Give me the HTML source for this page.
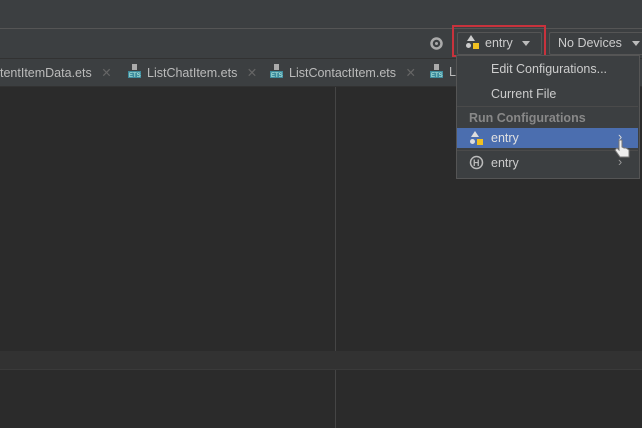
<!DOCTYPE html>
<html><head><style>
body{margin:0;width:642px;height:428px;overflow:hidden;background:#2b2b2b;font-family:"Liberation Sans",sans-serif;position:relative}
.a{position:absolute}
.t{color:#bbbbbb;font-size:12.5px;white-space:nowrap}
</style></head><body>
<div class="a" style="left:0;top:0;width:642px;height:28px;background:#3c3f41"></div>
<div class="a" style="left:0;top:28px;width:642px;height:1px;background:#555"></div>
<div class="a" style="left:0;top:29px;width:642px;height:29px;background:#3c3f41"></div>
<div class="a" style="left:0;top:58px;width:642px;height:1px;background:#323232"></div>
<div class="a" style="left:0;top:59px;width:642px;height:27px;background:#3c3f41"></div>
<div class="a" style="left:0;top:86px;width:642px;height:1px;background:#323232"></div>
<div class="a" style="left:335px;top:87px;width:1px;height:341px;background:#454545"></div>
<div class="a" style="left:0;top:351px;width:642px;height:19px;background:#323232"></div>
<div class="a" style="left:0;top:369px;width:642px;height:1px;background:#3a3a3a"></div>

<!-- tabs -->
<div class="a t" style="left:0;top:65px">tentItemData.ets <span style="color:#666;margin-left:6px">✕</span></div>
<svg class="a" style="left:127px;top:64px" width="15" height="15"><rect x="5" y="0" width="5" height="6" fill="#aaa"/><rect x="1" y="7" width="13" height="7" fill="#3d8a9c"/><text x="2" y="13" font-size="6" fill="#cfe" font-family="Liberation Sans">ETS</text></svg>
<div class="a t" style="left:147px;top:65px">ListChatItem.ets <span style="color:#666;margin-left:6px">✕</span></div>
<svg class="a" style="left:269px;top:64px" width="15" height="15"><rect x="5" y="0" width="5" height="6" fill="#aaa"/><rect x="1" y="7" width="13" height="7" fill="#3d8a9c"/><text x="2" y="13" font-size="6" fill="#cfe" font-family="Liberation Sans">ETS</text></svg>
<div class="a t" style="left:289px;top:65px">ListContactItem.ets <span style="color:#666;margin-left:6px">✕</span></div>
<svg class="a" style="left:429px;top:64px" width="15" height="15"><rect x="5" y="0" width="5" height="6" fill="#aaa"/><rect x="1" y="7" width="13" height="7" fill="#3d8a9c"/><text x="2" y="13" font-size="6" fill="#cfe" font-family="Liberation Sans">ETS</text></svg>
<div class="a t" style="left:449px;top:65px">L</div>

<!-- toolbar -->
<svg class="a" style="left:430px;top:37px" width="13" height="13"><circle cx="6.5" cy="6.5" r="5" fill="none" stroke="#aaa" stroke-width="2.5"/><circle cx="6.5" cy="6.5" r="1.5" fill="#aaa"/></svg>
<div class="a" style="left:452px;top:25px;width:90px;height:28px;border:2px solid #c8323c"></div>
<div class="a" style="left:457px;top:32px;width:83px;height:21px;border:1px solid #555;border-radius:2px;background:#3c3f41"></div>
<svg class="a" style="left:465px;top:34px" width="16" height="16"><polygon points="6,1 10,7 2,7" fill="#ccc"/><circle cx="3.5" cy="11.5" r="2.5" fill="#ccc"/><rect x="8" y="9" width="6" height="6" fill="#f0c020"/></svg>
<div class="a t" style="left:485px;top:36px;color:#ccc">entry</div>
<div class="a" style="left:522px;top:41px;border:4px solid transparent;border-top:5px solid #bbb"></div>
<div class="a" style="left:549px;top:32px;width:100px;height:21px;border:1px solid #555;border-radius:2px;background:#3c3f41"></div>
<div class="a t" style="left:558px;top:36px;color:#ccc">No Devices</div>
<div class="a" style="left:632px;top:41px;border:4px solid transparent;border-top:5px solid #bbb"></div>

<!-- dropdown -->
<div class="a" style="left:456px;top:55px;width:182px;height:122px;background:#3c3f41;border:1px solid #555"></div>
<div class="a t" style="left:491px;top:62px;color:#ccc">Edit Configurations...</div>
<div class="a t" style="left:491px;top:87px;color:#ccc">Current File</div>
<div class="a" style="left:457px;top:106px;width:181px;height:1px;background:#4a4a4a"></div>
<div class="a t" style="left:469px;top:111px;color:#888;font-weight:bold">Run Configurations</div>
<div class="a" style="left:457px;top:128px;width:181px;height:20px;background:#4b6eaf"></div>
<svg class="a" style="left:469px;top:130px" width="16" height="16"><polygon points="6,1 10,7 2,7" fill="#ddd"/><circle cx="3.5" cy="11.5" r="2.5" fill="#ddd"/><rect x="8" y="9" width="6" height="6" fill="#f0c020"/></svg>
<div class="a t" style="left:491px;top:131px;color:#e0e0e0">entry</div>
<div class="a t" style="left:618px;top:130px;color:#ddd">›</div>
<div class="a" style="left:457px;top:150px;width:181px;height:1px;background:#4a4a4a"></div>
<svg class="a" style="left:469px;top:155px" width="15" height="15"><circle cx="7.5" cy="7.5" r="6" fill="none" stroke="#bbb" stroke-width="1.5"/><text x="4" y="11" font-size="9" font-weight="bold" fill="#bbb" font-family="Liberation Sans">H</text></svg>
<div class="a t" style="left:491px;top:156px;color:#ccc">entry</div>
<div class="a t" style="left:618px;top:155px;color:#999">›</div>
<svg class="a" style="left:614px;top:138px" width="18" height="22"><path d="M5 2v10l-2-2-2 2 5 7h9v-7l-3-2-2 0-2-1V2z" fill="#eee" stroke="#777" stroke-width="1"/></svg>
</body></html>
